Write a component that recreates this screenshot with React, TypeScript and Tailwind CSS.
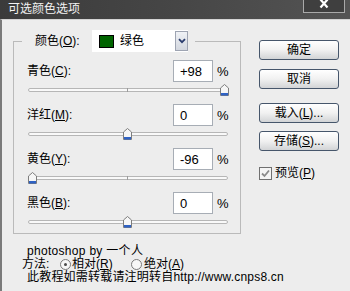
import React from "react";

const FONT = "font-['Liberation_Sans','Noto_Sans_CJK_SC',sans-serif]";

function Thumb() {
  return (
    <svg width="9" height="12" viewBox="0 0 9 12">
      <path d="M4.5 0.5 L8.5 4 L8.5 11.5 L0.5 11.5 L0.5 4 Z" fill="#f6f6f6" stroke="#7d7d7d" />
      <rect x="1" y="9" width="7" height="2.5" fill="#2f62c4" />
    </svg>
  );
}

function Slider({ value }: { value: number }) {
  const left = 96 + value * 0.99;
  return (
    <div className="relative h-[16px]">
      <div className="absolute left-[1px] right-[1px] top-[6px] h-[4px] rounded-full border border-[#b6b6b6] bg-[#f9f9f9]" />
      <div className="absolute left-[100px] top-[6px] h-[4px] w-px bg-[#9c9c9c]" />
      <div className="absolute top-[2px] leading-none" style={{ left }}>
        <Thumb />
      </div>
    </div>
  );
}

function Section({ label, mn, value }: { label: string; mn: string; value: number }) {
  const text = value > 0 ? `+${value}` : `${value}`;
  return (
    <div className="flex flex-col">
      <div className="flex h-[22px] items-center">
        <span className="flex-1 text-[12px] leading-[14px] text-black">
          {label}(<span className="underline">{mn}</span>):
        </span>
        <div className="flex h-[22px] w-[40px] items-center border border-[#a7adb5] bg-white pl-[6px] text-[13px] leading-none text-black">
          {text}
        </div>
        <span className="w-[16px] pl-[4px] text-[13px] leading-none text-black">%</span>
      </div>
      <Slider value={value} />
    </div>
  );
}

function Btn({ children }: { children: React.ReactNode }) {
  return (
    <button className="flex h-[20px] w-[80px] items-center justify-center rounded-[3px] border border-[#46566b] bg-gradient-to-b from-[#ffffff] via-[#f1f1f1] to-[#d2d4d6] text-[12px] leading-none text-black">
      {children}
    </button>
  );
}

function Radio({ checked }: { checked?: boolean }) {
  return (
    <span className="inline-flex h-[11px] w-[11px] items-center justify-center rounded-full border border-[#7b7b7b] bg-[#f7f7f7]">
      {checked ? <span className="h-[3px] w-[3px] rounded-full bg-[#4a4a4a]" /> : null}
    </span>
  );
}

export default function App() {
  return (
    <div className={`flex h-[291px] w-[350px] flex-col overflow-hidden bg-[#ededed] ${FONT}`}>
      {/* title bar */}
      <div className="flex h-[19px] shrink-0 bg-gradient-to-r from-[#3b3b3b] via-[#464646] to-[#545454]">
        <span className="pl-[8px] pt-[2px] text-[12px] leading-[14px] text-[#f2f2f2]">可选颜色选项</span>
        <div className="ml-auto mr-[5px] flex h-[13px] w-[42px] justify-center border border-t-0 border-[#a9a9a9] bg-[#3f3f3f]">
          <svg width="10" height="10" viewBox="0 0 10 10" className="mt-[-1px]">
            <path d="M1.5 0.5 L8.5 8.5 M8.5 0.5 L1.5 8.5" stroke="#ffffff" strokeWidth="2.2" />
          </svg>
        </div>
      </div>

      {/* body */}
      <div className="flex flex-1 border-l-2 border-t border-l-[#7a7a7a] border-t-[#d4d4d4] pl-[11px]">
        {/* left column */}
        <div className="flex w-[228px] shrink-0 flex-col">
          <fieldset className="mt-[10px] w-[228px] border border-[#bababa] pb-[3px] pl-[8px] pr-[11px] pt-[8px]">
            <legend className="pl-[13px] pr-[7px]">
              <div className="flex h-[22px] items-center">
                <span className="w-[57px] text-[12px] leading-[14px] text-black">
                  颜色(<span className="underline">O</span>):
                </span>
                <div className="flex h-[22px] w-[96px] items-center bg-white">
                  <span className="ml-[7px] h-[13px] w-[15px] border border-black bg-[#006400]" />
                  <span className="ml-[6px] text-[12px] leading-[14px] text-black">绿色</span>
                  <span className="ml-auto flex h-[20px] w-[13px] items-center justify-center border border-[#9ea4b2] bg-gradient-to-b from-[#f0f2f6] to-[#d3d7df]">
                    <svg width="8" height="6" viewBox="0 0 8 6">
                      <path d="M1 1.2 L4 4.2 L7 1.2" fill="none" stroke="#2b3d6e" strokeWidth="1.8" />
                    </svg>
                  </span>
                </div>
              </div>
            </legend>
            <div className="flex flex-col gap-[6px] pl-[5px]">
              <Section label="青色" mn="C" value={98} />
              <Section label="洋红" mn="M" value={0} />
              <Section label="黄色" mn="Y" value={-96} />
              <Section label="黑色" mn="B" value={0} />
            </div>
          </fieldset>

          <div className="mt-[11px] flex flex-col text-black">
            <span className="ml-[14px] h-[13px] whitespace-nowrap text-[12px] leading-[13px] tracking-[0.3px]">photoshop by 一个人</span>
            <div className="ml-[9px] flex h-[13px] items-center whitespace-nowrap text-[12px] leading-[13px]">
              <span className="w-[38px] shrink-0">方法:</span>
              <Radio checked />
              <span className="ml-[1px] w-[59px] shrink-0">
                相对(<span className="underline">R</span>)
              </span>
              <Radio />
              <span className="ml-[2px]">
                绝对(<span className="underline">A</span>)
              </span>
            </div>
            <span className="ml-[14px] h-[13px] whitespace-nowrap text-[12px] leading-[13px] tracking-[0.2px]">
              此教程如需转载请注明转自http://www.cnps8.cn
            </span>
          </div>
        </div>

        {/* right column */}
        <div className="ml-[18px] flex shrink-0 flex-col pt-[20px]">
          <Btn>确定</Btn>
          <div className="mt-[9px]">
            <Btn>取消</Btn>
          </div>
          <div className="mt-[14px]">
            <Btn>
              载入(<span className="underline">L</span>)...
            </Btn>
          </div>
          <div className="mt-[8px]">
            <Btn>
              存储(<span className="underline">S</span>)...
            </Btn>
          </div>
          <div className="mt-[15px] flex items-center">
            <span className="flex h-[13px] w-[13px] items-center justify-center border border-[#707070] bg-[#f4f4f4]">
              <svg width="9" height="9" viewBox="0 0 9 9">
                <path d="M1 4.5 L3.5 7 L8 1.5" fill="none" stroke="#8a8a8a" strokeWidth="1.8" />
              </svg>
            </span>
            <span className="ml-[3px] text-[12px] leading-[14px] text-black">
              预览(<span className="underline">P</span>)
            </span>
          </div>
        </div>
      </div>
    </div>
  );
}
